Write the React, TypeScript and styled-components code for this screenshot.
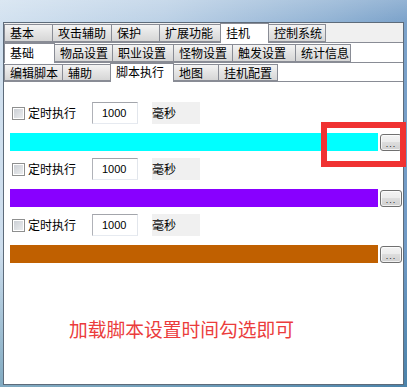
import styled, { createGlobalStyle } from "styled-components";

const GlobalStyle = createGlobalStyle`
    html, body {
        margin: 0;
        padding: 0;
    }
    body {
        width: 407px;
        height: 387px;
        overflow: hidden;
        font-family: "Noto Sans CJK SC", "Liberation Sans", sans-serif;
        font-size: 12px;
        color: #000;
    }
`

const Window = styled.div`
    position: relative;
    width: 407px;
    height: 387px;
    box-sizing: border-box;
    padding: 22px 3px 2px 3px;
    display: flex;
    background:
        linear-gradient(to bottom, rgba(255, 255, 255, 0.18), rgba(255, 255, 255, 0) 22px, rgba(40, 110, 140, 0) 250px, rgba(40, 110, 140, 0.45) 387px),
        linear-gradient(100deg, #d3e2f0 0%, #bcd1e6 35%, #92b3d4 70%, #6894c2 100%);
`

const Frame = styled.div`
    flex: 1;
    border: 1px solid #5d6b7a;
    background: #f0f0f0;
    display: flex;
    flex-direction: column;
    min-width: 0;
`

const TabRow = styled.div<{ h: number; bg: string }>`
    display: flex;
    align-items: flex-end;
    height: ${p => p.h}px;
    background: ${p => p.bg};
    border-bottom: 1px solid #898c95;
    flex-shrink: 0;
`

const Tab = styled.div<{ w: number; active?: boolean; rowH: number }>`
    position: relative;
    box-sizing: border-box;
    width: ${p => p.w + 1}px;
    margin-right: -1px;
    height: ${p => p.active ? p.rowH + 1 : p.rowH - 1}px;
    margin-bottom: ${p => p.active ? -1 : 0}px;
    z-index: ${p => p.active ? 2 : 1};
    border: 1px solid #898c95;
    border-bottom: ${p => p.active ? "none" : "1px solid #898c95"};
    background: ${p => p.active ? "#fff" : "linear-gradient(to bottom, #f4f4f4, #e4e4e4 50%, #d6d6d6)"};
    padding-left: 5px;
    padding-bottom: ${p => p.active ? 2 : 0}px;
    display: flex;
    align-items: center;
    line-height: 14px;
    white-space: nowrap;
    font-size: 12px;
`

const Content = styled.div`
    flex: 1;
    background: #fff;
    padding: 20px 1px 0 6px;
    display: flex;
    flex-direction: column;
`

const Group = styled.div`
    display: flex;
    flex-direction: column;
    gap: 9px;
    margin-bottom: 7px;
`

const OptionRow = styled.div`
    display: flex;
    align-items: center;
    height: 22px;
    padding-left: 2px;
`

const CheckBox = styled.span`
    box-sizing: border-box;
    width: 13px;
    height: 13px;
    border: 1px solid #8e8f8f;
    background: linear-gradient(135deg, #c8ccd2, #eef0f2);
    box-shadow: inset 0 0 0 1px #fff;
    flex-shrink: 0;
`

const Label = styled.span`
    margin-left: 3px;
    width: 48px;
    line-height: 14px;
    white-space: nowrap;
`

const NumberBox = styled.div`
    box-sizing: border-box;
    margin-left: 16px;
    width: 46px;
    height: 22px;
    border: 1px solid;
    border-color: #a3a5ab #e2e6ec #e6eaf0 #b0b2b8;
    padding-left: 9px;
    display: flex;
    align-items: center;
    font-family: "Liberation Sans", Arial, sans-serif;
    font-size: 11px;
`

const UnitBox = styled.div`
    margin-left: 14px;
    width: 48px;
    height: 22px;
    background: #f0f0f0;
    display: flex;
    align-items: center;
    line-height: 14px;
`

const BarRow = styled.div`
    display: flex;
    align-items: center;
    gap: 2px;
    height: 18px;
`

const ColorBar = styled.div<{ color: string }>`
    flex: 1;
    height: 18px;
    background: ${p => p.color};
`

const DotsButton = styled.div`
    box-sizing: border-box;
    width: 22px;
    height: 17px;
    border: 1px solid #707070;
    border-radius: 3px;
    background: linear-gradient(to bottom, #f3f3f3, #ebebeb 50%, #dddddd 50%, #cfcfcf);
    box-shadow: inset 0 0 0 1px rgba(255, 255, 255, 0.7);
    display: flex;
    align-items: flex-end;
    justify-content: center;
    font-family: "Liberation Sans", Arial, sans-serif;
    font-size: 9px;
    line-height: 11px;
    letter-spacing: 1px;
    color: #222;
`

const Note = styled.div`
    margin-top: 49px;
    margin-left: 59px;
    color: #eb3c3c;
    font-size: 18.75px;
    line-height: 19px;
    white-space: nowrap;
`

const Highlight = styled.div`
    position: absolute;
    left: 321px;
    top: 122px;
    width: 85px;
    height: 45px;
    box-sizing: border-box;
    border: 6px solid #f03232;
    pointer-events: none;

    ::before {
        content: "";
        position: absolute;
        left: 5px;
        top: -6px;
        bottom: 0;
        width: 1px;
        background: #8a3a3a;
    }
`

interface ITab {
    label: string
    w: number
    active?: boolean
}

const rows: { h: number; bg: string; tabs: ITab[] }[] = [
    {
        h: 19, bg: "#f0f0f0", tabs: [
            { label: "基本", w: 48 },
            { label: "攻击辅助", w: 59 },
            { label: "保护", w: 48 },
            { label: "扩展功能", w: 61 },
            { label: "挂机", w: 48, active: true },
            { label: "控制系统", w: 57 },
        ]
    },
    {
        h: 19, bg: "#fff", tabs: [
            { label: "基础", w: 50, active: true },
            { label: "物品设置", w: 58 },
            { label: "职业设置", w: 61 },
            { label: "怪物设置", w: 59 },
            { label: "触发设置", w: 63 },
            { label: "统计信息", w: 55 },
        ]
    },
    {
        h: 18, bg: "#fff", tabs: [
            { label: "编辑脚本", w: 58 },
            { label: "辅助", w: 48 },
            { label: "脚本执行", w: 63, active: true },
            { label: "地图", w: 45 },
            { label: "挂机配置", w: 59 },
        ]
    },
]

const bars = ["#00ffff", "#8800ff", "#c06000"]

export default function App() {
    return <>
        <GlobalStyle />
        <Window>
            <Frame>
                {rows.map((row, i) =>
                    <TabRow key={i} h={row.h} bg={row.bg}>
                        {row.tabs.map(tab =>
                            <Tab key={tab.label} w={tab.w} active={tab.active} rowH={row.h}>
                                {tab.label}
                            </Tab>
                        )}
                    </TabRow>
                )}
                <Content>
                    {bars.map(color =>
                        <Group key={color}>
                            <OptionRow>
                                <CheckBox />
                                <Label>定时执行</Label>
                                <NumberBox>1000</NumberBox>
                                <UnitBox>毫秒</UnitBox>
                            </OptionRow>
                            <BarRow>
                                <ColorBar color={color} />
                                <DotsButton>...</DotsButton>
                            </BarRow>
                        </Group>
                    )}
                    <Note>加载脚本设置时间勾选即可</Note>
                </Content>
            </Frame>
            <Highlight />
        </Window>
    </>
}
